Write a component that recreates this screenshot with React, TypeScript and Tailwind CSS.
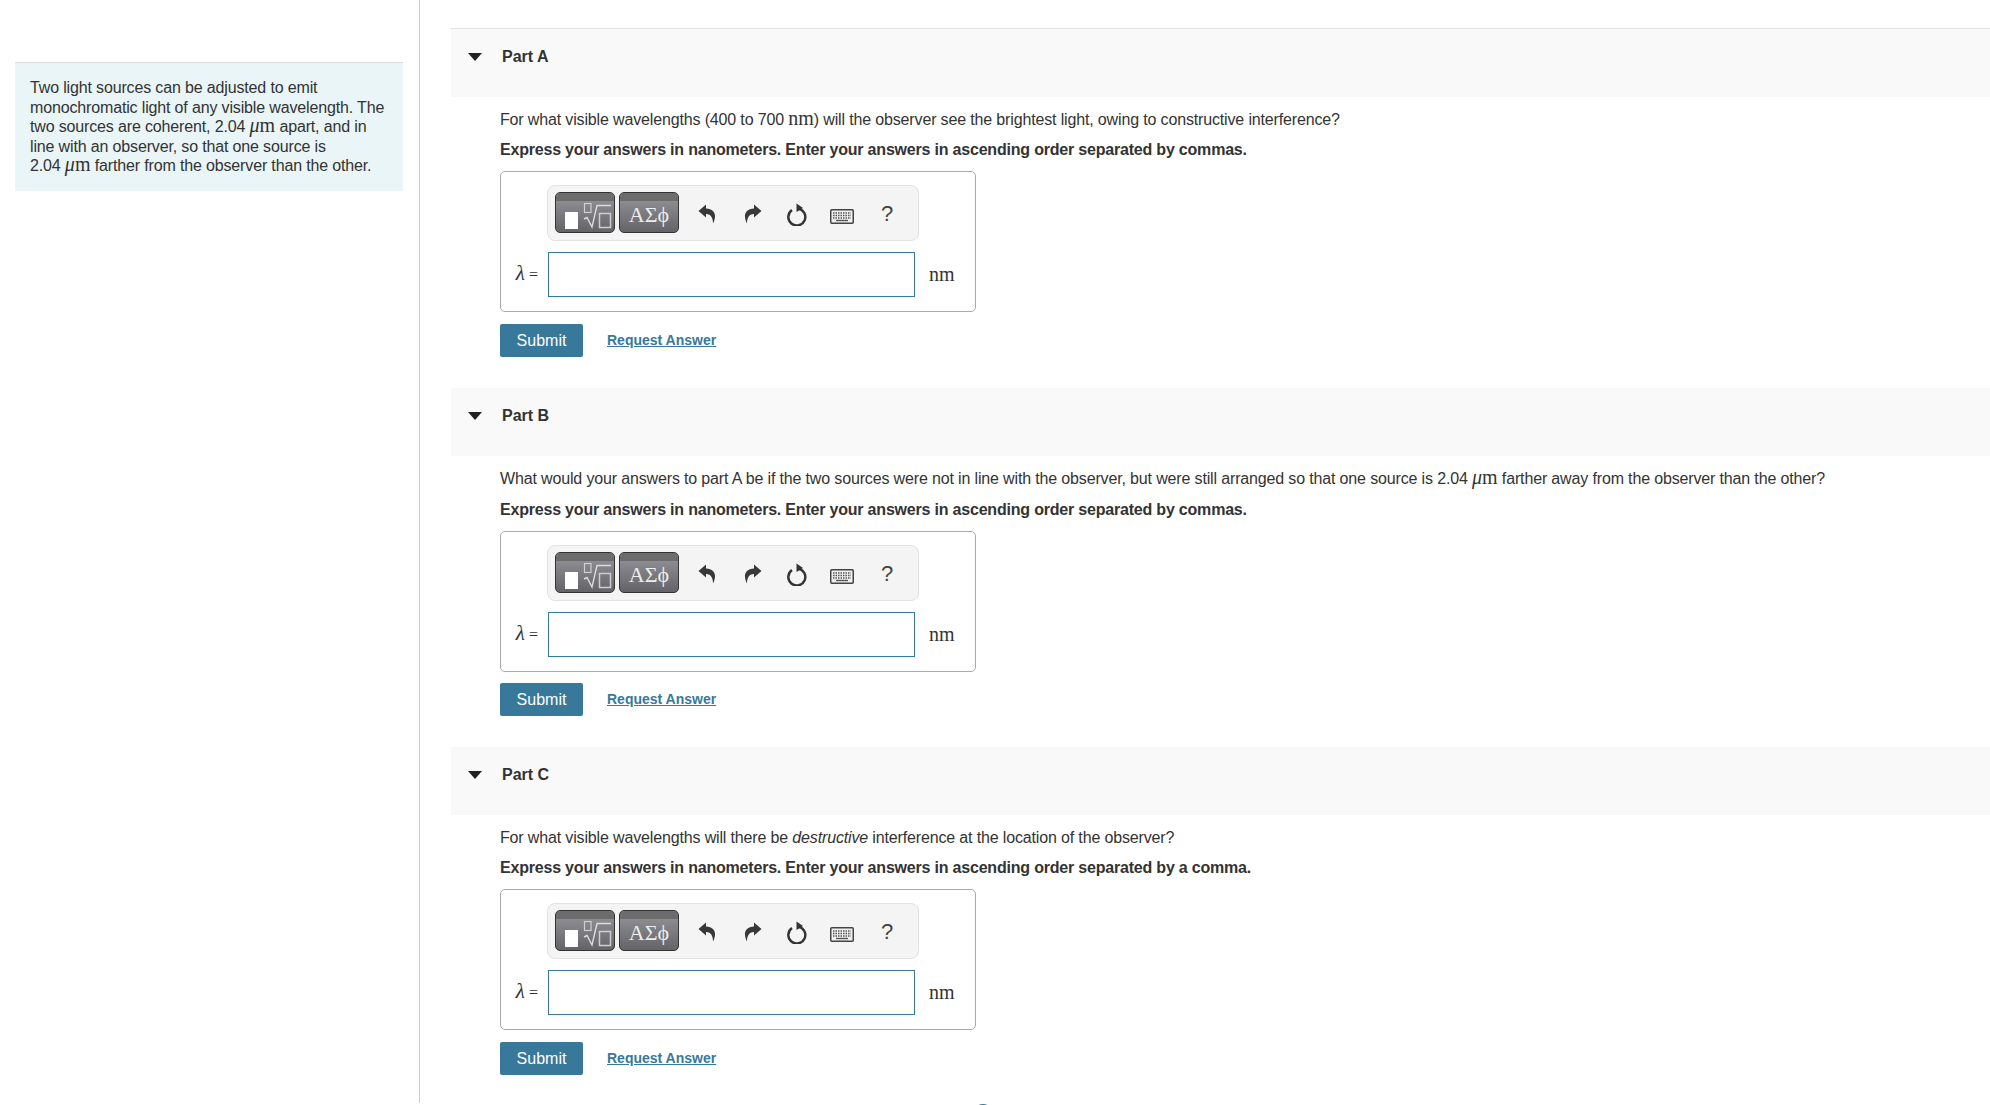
import React from "react";

const MATH = "font-['Liberation_Serif',serif] text-[20px] leading-[0] tracking-normal";

const Mu = () => (
  <span className={MATH}>
    <i>μ</i>m
  </span>
);

const MathEditorIcon = () => (
  <svg width="58" height="39" viewBox="0 0 58 39" className="-mt-[8px] shrink-0">
    <rect x="9" y="19" width="13" height="17" fill="#ffffff" />
    <rect x="28.5" y="10.5" width="6.5" height="9" fill="none" stroke="#cfcfcf" strokeWidth="1.2" />
    <rect x="43.5" y="20.5" width="11" height="14" fill="none" stroke="#cfcfcf" strokeWidth="1.5" />
    <path d="M28 26 L31 24.5 L36 34 L41 12.5 L55 12.5" fill="none" stroke="#dcdcdc" strokeWidth="1.4" />
  </svg>
);

const ToolbarButton = ({ children }: { children: React.ReactNode }) => (
  <div className="w-[60px] h-[41px] rounded-[5px] border border-[#333333] overflow-hidden flex flex-col items-center bg-gradient-to-b from-[#96969c] to-[#646468]">
    <div className="h-[8px] w-full bg-[#6c6c6c] shrink-0" />
    {children}
  </div>
);

const UndoIcon = ({ flip }: { flip?: boolean }) => (
  <svg width="18" height="20" viewBox="0 0 18 20" className={flip ? "-scale-x-100" : ""}>
    <path d="M0.5 7 L8 0.5 V4.5 C14 4.5 17.5 8.5 17 13 C16.8 15.5 16 17.5 15 19.5 C15 15 13.5 10 8 10 V13.5 Z" fill="#383838" />
  </svg>
);

const ResetIcon = () => (
  <svg width="21" height="23" viewBox="0 0 21 23">
    <path d="M5 7 A8.5 8.5 0 1 0 11 5.6" fill="none" stroke="#333333" strokeWidth="2.4" />
    <path d="M9.5 0.5 L16 5 L9.5 9 Z" fill="#333333" />
  </svg>
);

const KeyboardIcon = () => (
  <svg width="24" height="15" viewBox="0 0 24 15">
    <rect x="0.75" y="0.75" width="22.5" height="13.5" rx="1" fill="#f0f0f0" stroke="#444444" strokeWidth="1.5" />
    <path d="M3 4 H21 M3 6.5 H21 M3 9 H21" stroke="#555555" strokeWidth="1.4" strokeDasharray="1.5 1" />
    <path d="M6 11.5 H18" stroke="#555555" strokeWidth="1.4" />
  </svg>
);

const AnswerBox = () => (
  <div className="w-[476px] h-[141px] border border-[#aaaaaa] rounded-[5px] pt-[13px]">
    <div className="ml-[46px] w-[372px] h-[56px] bg-[#f4f4f4] border border-[#e2e2e2] rounded-[8px] flex items-center pl-[7px]">
      <div className="flex gap-[4px] mb-[1px]">
        <ToolbarButton>
          <MathEditorIcon />
        </ToolbarButton>
        <ToolbarButton>
          <span className="font-['Liberation_Serif',serif] text-[22px] leading-[27px] text-[#ececec]">ΑΣϕ</span>
        </ToolbarButton>
      </div>
      <div className="ml-[19px] mt-[2px] flex items-center">
        <div className="w-[18px] flex justify-center"><UndoIcon /></div>
        <div className="ml-[28px] w-[18px] flex justify-center"><UndoIcon flip /></div>
        <div className="ml-[25px] w-[21px] flex justify-center"><ResetIcon /></div>
        <div className="ml-[22px] w-[24px] flex justify-center mt-[5px]"><KeyboardIcon /></div>
        <span className="ml-[27px] font-['Liberation_Sans',sans-serif] text-[22px] leading-none text-[#444444]">?</span>
      </div>
    </div>
    <div className="flex items-center mt-[11px]">
      <span className="w-[47px] pr-[10px] text-right font-['Liberation_Serif',serif] text-[16px] leading-none text-[#333333]">
        <i className="text-[21px] leading-[0]">λ</i> =
      </span>
      <input
        type="text"
        className="w-[367px] h-[45px] border border-[#337a9c] bg-white outline-none"
      />
      <span className={`ml-[14px] -mt-[2px] text-[#333333] ${MATH}`}>nm</span>
    </div>
  </div>
);

interface PartProps {
  label: string;
  question: React.ReactNode;
  note: string;
  noteClass: string;
  submitClass: string;
}

const Part = ({ label, question, note, noteClass, submitClass }: PartProps) => (
  <section>
    <div className="h-[68px] bg-[#f9f9f9] flex items-center pl-[17px] pb-[13px]">
      <svg width="14" height="8" viewBox="0 0 14 8">
        <path d="M0 0 H14 L7 8 Z" fill="#222222" />
      </svg>
      <span className="ml-[20px] font-bold text-[16px] text-[#333333]">{label}</span>
    </div>
    <div className="pl-[49px]">
      <p className="mt-[13px] text-[16px] leading-[20px] tracking-[-0.15px] text-[#333333]">{question}</p>
      <p className={`text-[16px] leading-[20px] tracking-[-0.2px] font-bold text-[#333333] ${noteClass}`}>{note}</p>
      <div className="mt-[11px]">
        <AnswerBox />
        <div className={`flex items-center ${submitClass}`}>
          <button className="w-[83px] h-[33px] bg-[#37789b] rounded-[2px] text-white text-[16px]">Submit</button>
          <a className="ml-[24px] text-[14px] font-bold text-[#37789b] underline">Request Answer</a>
        </div>
      </div>
    </div>
  </section>
);

export default function App() {
  return (
    <div className="h-[1105px] overflow-hidden bg-white flex font-['Liberation_Sans',Arial,sans-serif]">
      <aside className="w-[420px] h-[1103px] shrink-0 border-r border-[#c8ced9] pt-[62px] pl-[15px]">
        <div className="w-[388px] h-[129px] bg-[#e9f5f7] border-t border-[#dddddd] px-[15px] pt-[15px] text-[16px] leading-[19.5px] tracking-[-0.15px] text-[#333333]">
          Two light sources can be adjusted to emit monochromatic light of any visible wavelength. The two sources are coherent, 2.04 <Mu /> apart, and in line with an observer, so that one source is
          <br />
          2.04 <Mu /> farther from the observer than the other.
        </div>
      </aside>
      <main className="flex-1 min-w-0 ml-[31px] pt-[28px]">
        <div className="border-t border-[#e2e2e2]">
          <Part
            label="Part A"
            noteClass="mt-[10px]"
            submitClass="mt-[12px]"
            question={
              <>
                For what visible wavelengths (400 to 700 <span className={MATH}>nm</span>) will the observer see the brightest light, owing to constructive interference?
              </>
            }
            note="Express your answers in nanometers. Enter your answers in ascending order separated by commas."
          />
        </div>
        <div className="mt-[31px]">
          <Part
            label="Part B"
            noteClass="mt-[11px]"
            submitClass="mt-[11px]"
            question={
              <>
                What would your answers to part A be if the two sources were not in line with the observer, but were still arranged so that one source is 2.04 <Mu /> farther away from the observer than the other?
              </>
            }
            note="Express your answers in nanometers. Enter your answers in ascending order separated by commas."
          />
        </div>
        <div className="mt-[31px]">
          <Part
            label="Part C"
            noteClass="mt-[10px]"
            submitClass="mt-[12px]"
            question={
              <>
                For what visible wavelengths will there be <i>destructive</i> interference at the location of the observer?
              </>
            }
            note="Express your answers in nanometers. Enter your answers in ascending order separated by a comma."
          />
        </div>
        <div className="ml-[522px] mt-[29px] w-[20px] h-[20px] rounded-full bg-[#37789b]" />
      </main>
    </div>
  );
}
